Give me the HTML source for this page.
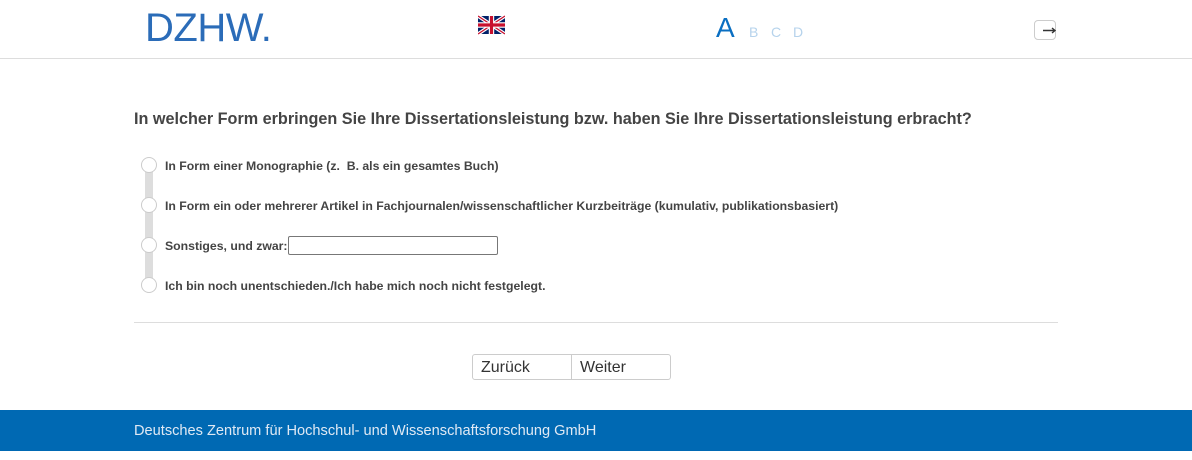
<!DOCTYPE html>
<html><head><meta charset="utf-8"><style>
*{margin:0;padding:0;box-sizing:border-box}
body{width:1192px;height:460px;background:#fff;font-family:"Liberation Sans",sans-serif;position:relative;overflow:hidden;color:#444}
.hdr{position:absolute;left:0;top:0;width:1192px;height:59px;border-bottom:1px solid #ddd}
.logo{position:absolute;left:145px;top:6px;font-size:40px;color:#2b6cb8;letter-spacing:-0.5px;font-family:"Liberation Sans",sans-serif}
.flag{position:absolute;left:478px;top:15px}
.A{position:absolute;left:716px;top:12px;font-size:28px;color:#0a6fc2}
.bcd{position:absolute;top:24px;font-size:14px;color:#b6d3ec}
.exit{position:absolute;left:1034px;top:20px;width:22px;height:20px;border:1px solid #ccc;border-radius:4px}
.q{position:absolute;left:134px;top:110px;font-size:16.2px;font-weight:bold;color:#444}
.bar{position:absolute;left:145px;top:165px;width:8px;height:120px;background:#ddd}
.rad{position:absolute;left:141px;width:16px;height:16px;border:1px solid #ccc;border-radius:50%;background:#fff}
.opt{position:absolute;left:165px;font-size:12.25px;font-weight:bold;color:#444}
.inp{position:absolute;left:288px;top:236px;width:210px;height:19px;border:1px solid #777;border-radius:2px}
.hr{position:absolute;left:134px;top:322px;width:924px;height:1px;background:#ddd}
.btn{position:absolute;top:354px;height:26px;border:1px solid #ccc;font-size:16px;color:#333;padding:4px 8px}
.ft{position:absolute;left:0;top:410px;width:1192px;height:41px;background:#0069b3;color:#dfe9f4;font-size:14.6px;padding:13px 0 0 134px}
</style></head><body>
<div class="hdr">
<div class="logo">DZHW.</div>
<svg class="flag" width="27" height="20" viewBox="0 0 60 40"><rect width="60" height="40" fill="#012169"/><path d="M0 0L60 40M60 0L0 40" stroke="#fff" stroke-width="8"/><path d="M0 0L60 40M60 0L0 40" stroke="#c8102e" stroke-width="3"/><path d="M30 0V40M0 20H60" stroke="#fff" stroke-width="12"/><path d="M30 0V40M0 20H60" stroke="#c8102e" stroke-width="7"/></svg>
<div class="A">A</div>
<div class="bcd" style="left:749px">B</div>
<div class="bcd" style="left:771px">C</div>
<div class="bcd" style="left:793px">D</div>
<div class="exit"><svg width="22" height="20" style="position:absolute;left:0;top:0"><path d="M8 9.5H20M17 7l3 2.5-3 2.5" stroke="#333" stroke-width="1.4" fill="none"/></svg></div>
</div>
<div class="q">In welcher Form erbringen Sie Ihre Dissertationsleistung bzw. haben Sie Ihre Dissertationsleistung erbracht?</div>
<div class="bar"></div>
<div class="rad" style="top:157px"></div>
<div class="rad" style="top:197px"></div>
<div class="rad" style="top:237px"></div>
<div class="rad" style="top:277px"></div>
<div class="opt" style="top:159px">In Form einer Monographie (z.&nbsp; B. als ein gesamtes Buch)</div>
<div class="opt" style="top:199px">In Form ein oder mehrerer Artikel in Fachjournalen/wissenschaftlicher Kurzbeiträge (kumulativ, publikationsbasiert)</div>
<div class="opt" style="top:239px">Sonstiges, und zwar:</div>
<div class="inp"></div>
<div class="opt" style="top:279px">Ich bin noch unentschieden./Ich habe mich noch nicht festgelegt.</div>
<div class="hr"></div>
<div class="btn" style="left:472px;width:100px;border-radius:3px 0 0 3px">Zurück</div>
<div class="btn" style="left:571px;width:100px;border-radius:0 3px 3px 0">Weiter</div>
<div class="ft">Deutsches Zentrum für Hochschul- und Wissenschaftsforschung GmbH</div>
</body></html>
